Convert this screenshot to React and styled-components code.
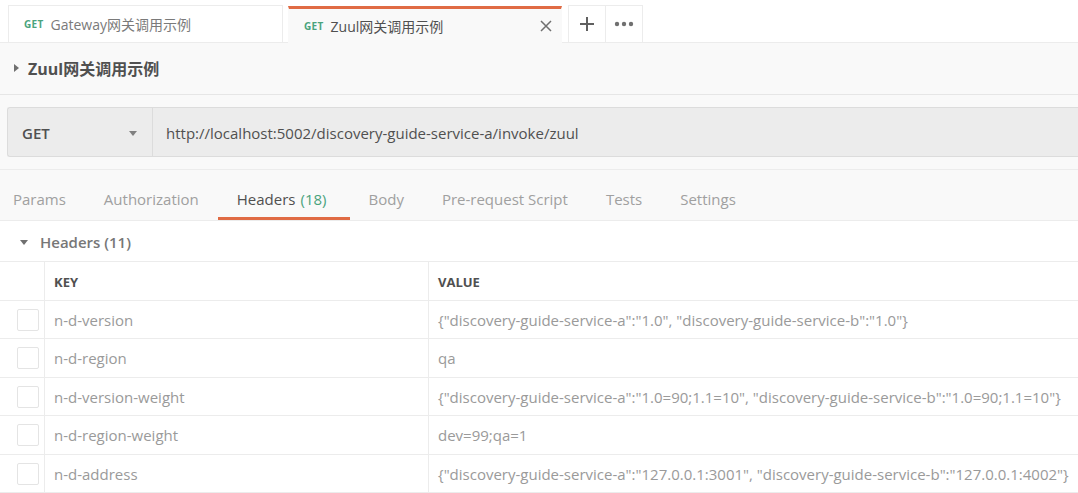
import React from 'react'
import styled, { createGlobalStyle } from 'styled-components'

const GlobalStyle = createGlobalStyle`
  html, body {
    margin: 0;
    padding: 0;
    background: #ffffff;
    font-family: "Open Sans", "Noto Sans CJK SC", sans-serif;
    overflow: hidden;
  }
`

const Page = styled.div`
  width: 1078px;
  height: 493px;
  overflow: hidden;
  display: flex;
  flex-direction: column;
`

const TabBar = styled.div`
  display: flex;
  align-items: flex-end;
  height: 43px;
  padding-left: 8px;
  background: #ffffff;
  border-bottom: 1px solid #ececec;
  box-sizing: border-box;
`

const ReqTab = styled.div`
  width: ${(p) => (p.active ? 274 : 275)}px;
  height: 37px;
  box-sizing: border-box;
  margin-right: 5px;
  display: flex;
  align-items: center;
  padding-left: 15px;
  background: ${(p) => (p.active ? '#f9f9f9' : '#ffffff')};
  border: 1px solid ${(p) => (p.active ? 'transparent' : '#ececec')};
  border-bottom: none;
  border-top: ${(p) => (p.active ? '3px solid #e06b44' : '1px solid #ececec')};
  margin-bottom: ${(p) => (p.active ? '-1px' : '0')};
  font-size: 14px;
  color: #505050;
`

const Method = styled.span`
  font-size: 10px;
  font-weight: 700;
  color: #4aa37d;
  margin-right: 7px;
  letter-spacing: 0.3px;
`

const TabName = styled.span`
  color: ${(p) => (p.dim ? '#7a7a7a' : '#505050')};
  flex: 1;
`

const Close = styled.span`
  width: 30px;
  display: flex;
  justify-content: center;
  align-items: center;
`

const TabActions = styled.div`
  display: flex;
  height: 37px;
  margin-left: 1px;
  border: 1px solid #ececec;
  border-bottom: none;
  box-sizing: border-box;
`

const ActionBtn = styled.div`
  width: 36px;
  display: flex;
  align-items: center;
  justify-content: center;
  border-right: ${(p) => (p.last ? 'none' : '1px solid #ececec')};
`

const TitleBar = styled.div`
  height: 53px;
  background: #f9f9f9;
  border-bottom: 1px solid #e6e6e6;
  box-sizing: border-box;
  display: flex;
  align-items: center;
  padding-left: 13px;
  gap: 7px;
  font-size: 16px;
  font-weight: 700;
  color: #505050;
`

const UrlSection = styled.div`
  background: #f9f9f9;
  padding: 12px 0 12px 7px;
  border-bottom: 1px solid #ececec;
`

const UrlGroup = styled.div`
  display: flex;
  height: 50px;
  background: #ececec;
  border: 1px solid #dcdcdc;
  border-right: none;
  border-radius: 3px 0 0 3px;
  box-sizing: border-box;
`

const MethodSelect = styled.div`
  width: 145px;
  box-sizing: border-box;
  display: flex;
  align-items: center;
  justify-content: space-between;
  padding: 2px 15px 0 14px;
  border-right: 1px solid #dcdcdc;
  font-size: 15px;
  font-weight: 600;
  color: #505050;
`

const UrlText = styled.div`
  display: flex;
  align-items: center;
  padding: 2px 0 0 13px;
  font-size: 15px;
  color: #505050;
`

const ReqTabs = styled.div`
  display: flex;
  height: 51px;
  background: #f9f9f9;
  border-bottom: 1px solid #ececec;
  box-sizing: border-box;
  padding-left: 13px;
`

const ReqTabItem = styled.div`
  position: relative;
  display: flex;
  align-items: center;
  padding: 8px ${(p) => (p.active ? '24px' : '0')} 0 ${(p) => (p.active ? '19px' : '0')};
  margin-right: ${(p) => (p.active ? 18 : 38)}px;
  margin-left: ${(p) => (p.active ? -19 : 0)}px;
  font-size: 15px;
  color: ${(p) => (p.active ? '#505050' : '#a0a0a0')};

  &::after {
    content: '';
    display: ${(p) => (p.active ? 'block' : 'none')};
    position: absolute;
    left: 0;
    right: 0;
    bottom: 0;
    height: 3px;
    background: #e06b44;
  }
`

const Count = styled.span`
  color: #4aa37d;
  margin-left: 5px;
`

const SectionHead = styled.div`
  height: 41px;
  display: flex;
  align-items: center;
  padding: 2px 0 0 20px;
  gap: 12px;
  background: #ffffff;
  border-bottom: 1px solid #ececec;
  box-sizing: border-box;
  font-size: 15px;
  font-weight: 600;
  color: #777777;
`

const Table = styled.div`
  display: grid;
  grid-template-columns: 45px 384px 1fr;
  background: #ffffff;
`

const Cell = styled.div`
  height: ${(p) => (p.head ? 39 : 38.5)}px;
  box-sizing: border-box;
  display: flex;
  align-items: center;
  padding-left: ${(p) => (p.check ? 17 : 9)}px;
  padding-top: ${(p) => (p.head ? 3 : 1)}px;
  border-bottom: 1px solid #ececec;
  border-right: ${(p) => (p.last ? 'none' : '1px solid #ececec')};
  font-size: ${(p) => (p.head ? 13 : 15)}px;
  font-weight: ${(p) => (p.head ? 700 : 400)};
  color: ${(p) => (p.head ? '#505050' : '#9a9a9a')};
  white-space: nowrap;
  overflow: hidden;
`

const Check = styled.div`
  width: 22px;
  height: 22px;
  box-sizing: border-box;
  border: 1px solid #e4e4e4;
  border-radius: 2px;
  background: #ffffff;
`

const Caret = ({ dir = 'right', color = '#707070', size = 6 }) => (
  <svg width={size + 2} height={size + 4} viewBox="0 0 8 10">
    {dir === 'right' ? (
      <path d="M1 1 L6 5 L1 9 Z" fill={color} />
    ) : (
      <path d="M0 3 L8 3 L4 8 Z" fill={color} />
    )}
  </svg>
)

const headers = [
  ['n-d-version', '{"discovery-guide-service-a":"1.0", "discovery-guide-service-b":"1.0"}'],
  ['n-d-region', 'qa'],
  ['n-d-version-weight', '{"discovery-guide-service-a":"1.0=90;1.1=10", "discovery-guide-service-b":"1.0=90;1.1=10"}'],
  ['n-d-region-weight', 'dev=99;qa=1'],
  ['n-d-address', '{"discovery-guide-service-a":"127.0.0.1:3001", "discovery-guide-service-b":"127.0.0.1:4002"}'],
]

const tabs = ['Params', 'Authorization', 'Headers', 'Body', 'Pre-request Script', 'Tests', 'Settings']

export default function App() {
  return (
    <Page>
      <GlobalStyle />
      <TabBar>
        <ReqTab>
          <Method>GET</Method>
          <TabName dim>Gateway网关调用示例</TabName>
        </ReqTab>
        <ReqTab active>
          <Method>GET</Method>
          <TabName>Zuul网关调用示例</TabName>
          <Close>
            <svg width="12" height="12" viewBox="0 0 12 12">
              <path d="M1 1 L11 11 M11 1 L1 11" stroke="#707070" strokeWidth="1.5" />
            </svg>
          </Close>
        </ReqTab>
        <TabActions>
          <ActionBtn>
            <svg width="14" height="14" viewBox="0 0 14 14">
              <path d="M7 0 V14 M0 7 H14" stroke="#606060" strokeWidth="2" />
            </svg>
          </ActionBtn>
          <ActionBtn last>
            <svg width="20" height="6" viewBox="0 0 20 6">
              <circle cx="3" cy="3" r="2.2" fill="#707070" />
              <circle cx="10" cy="3" r="2.2" fill="#707070" />
              <circle cx="17" cy="3" r="2.2" fill="#707070" />
            </svg>
          </ActionBtn>
        </TabActions>
      </TabBar>

      <TitleBar>
        <Caret dir="right" />
        Zuul网关调用示例
      </TitleBar>

      <UrlSection>
        <UrlGroup>
          <MethodSelect>
            GET
            <Caret dir="down" color="#808080" />
          </MethodSelect>
          <UrlText>http://localhost:5002/discovery-guide-service-a/invoke/zuul</UrlText>
        </UrlGroup>
      </UrlSection>

      <ReqTabs>
        {tabs.map((t) => (
          <ReqTabItem key={t} active={t === 'Headers'}>
            {t}
            {t === 'Headers' && <Count>(18)</Count>}
          </ReqTabItem>
        ))}
      </ReqTabs>

      <SectionHead>
        <Caret dir="down" color="#707070" />
        Headers (11)
      </SectionHead>

      <Table>
        <Cell head />
        <Cell head>KEY</Cell>
        <Cell head last>VALUE</Cell>
        {headers.map(([k, v]) => (
          <React.Fragment key={k}>
            <Cell check>
              <Check />
            </Cell>
            <Cell>{k}</Cell>
            <Cell last>{v}</Cell>
          </React.Fragment>
        ))}
      </Table>
    </Page>
  )
}
